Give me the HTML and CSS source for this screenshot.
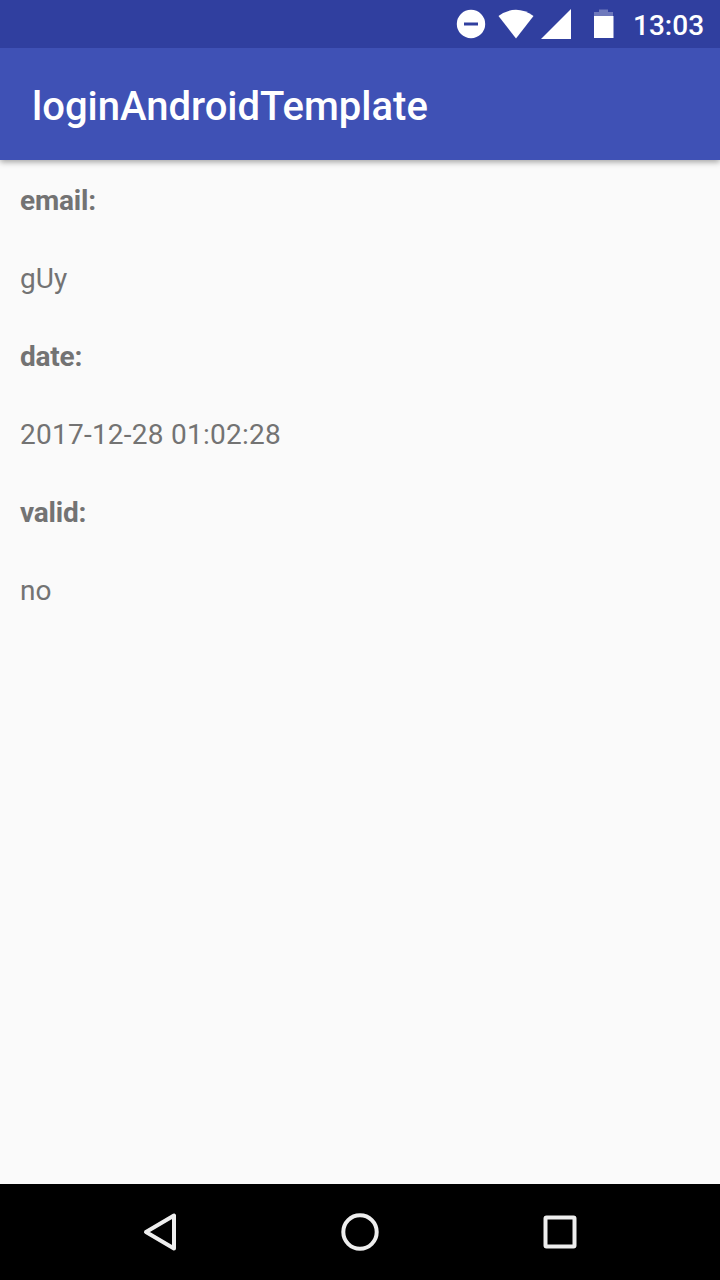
FILE: index.html
```html
<!DOCTYPE html>
<html lang="en">
<head>
<meta charset="utf-8">
<title>loginAndroidTemplate</title>
<link rel="stylesheet" href="styles.css">
</head>
<body>
<div class="screen">
  <div class="status-bar">
    <svg class="status-icons" viewBox="0 0 176 48" width="176" height="48">
      <circle cx="23" cy="24" r="14.200" fill="#fff"/>
      <path d="M16 24h14" stroke="#303f9f" stroke-width="3"/>
      <path d="M50.500 16Q68 3.500 85.500 16L68 38.500Z" fill="#fff"/>
      <path d="M93 39L123 9V39Z" fill="#fff"/>
      <path d="M146 12h5V9.500h9V12h5v4h-19z" fill="#fff" fill-opacity=".3"/>
      <path d="M146 16h19.500v22h-19.500z" fill="#fff"/>
    </svg>
    <span class="clock">13:03</span>
  </div>
  <header class="app-bar"><h1 class="title">loginAndroidTemplate</h1></header>
  <main class="content">
    <div class="label">email:</div>
    <div class="value">gUy</div>
    <div class="label">date:</div>
    <div class="value date">2017-12-28 01:02:28</div>
    <div class="label">valid:</div>
    <div class="value">no</div>
  </main>
  <nav class="nav-bar">
    <svg class="nav-icon" viewBox="0 0 48 48"><path d="M38 7.500v33L10 24Z"/></svg>
    <svg class="nav-icon" viewBox="0 0 48 48"><circle cx="24" cy="24" r="16.700"/></svg>
    <svg class="nav-icon" viewBox="0 0 48 48"><rect x="9.500" y="9.500" width="29" height="29" rx="1"/></svg>
  </nav>
</div>
</body>
</html>
```
FILE: styles.css
```css
body {
  margin: 0;
  font-family: Roboto, "Noto Sans", sans-serif;
}
.screen {
  width: 720px;
  height: 1280px;
  display: flex;
  flex-direction: column;
  background: #fafafa;
}
.status-bar {
  position: relative;
  z-index: 1;
  height: 48px;
  display: flex;
  align-items: center;
  justify-content: flex-end;
  background: #303f9f;
}
.status-icons {
  display: block;
}
.clock {
  width: 96px;
  padding-left: 9px;
  box-sizing: border-box;
  color: #fff;
  font-size: 28px;
  font-weight: 500;
  line-height: 48px;
  padding-top: 3px;
  white-space: nowrap;
}
.app-bar {
  height: 112px;
  box-sizing: border-box;
  display: flex;
  align-items: center;
  padding: 6px 0 0 32px;
  background: #3f51b5;
  box-shadow: 0 2px 6px rgba(0, 0, 0, .36);
}
.title {
  margin: 0;
  color: #fff;
  font-size: 40px;
  font-weight: 500;
  line-height: 48px;
}
.content {
  flex: 1;
  display: flex;
  flex-direction: column;
  gap: 40px;
  padding: 20px;
  padding-top: 22px;
  color: #737373;
  font-size: 28px;
  line-height: 38px;
}
.label {
  font-weight: 700;
  letter-spacing: -.2px;
}
.date {
  letter-spacing: .24px;
}
.nav-bar {
  height: 96px;
  display: flex;
  align-items: center;
  justify-content: center;
  gap: 152px;
  background: #000;
}
.nav-icon {
  width: 48px;
  height: 48px;
  fill: none;
  stroke: #eee;
  stroke-width: 4;
  stroke-linejoin: round;
}
```
